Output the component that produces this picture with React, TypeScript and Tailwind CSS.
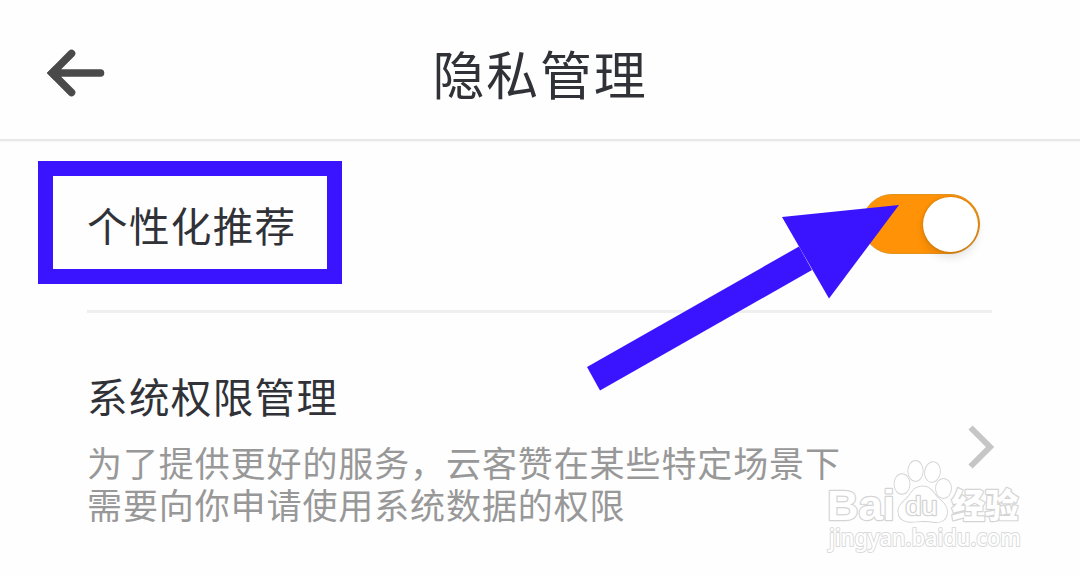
const BackIcon = () => {
  return (
    <svg width="58" height="50" viewBox="0 0 58 50" fill="none">
      <path
        d="M24.5 5.5 L5 25 L24.5 44.5 M6 25 H53.5"
        stroke="#4a4a4a"
        strokeWidth="7.6"
        strokeLinecap="round"
      />
      <path d="M0 25 L7 18 L18 25 L7 32 Z" fill="#4a4a4a" />
    </svg>
  );
};

const ChevronIcon = () => {
  return (
    <svg width="26" height="44" viewBox="0 0 26 44" fill="none">
      <path d="M2.5 2.5 L22 22 L2.5 41.5" stroke="#c6c6c6" strokeWidth="6" />
    </svg>
  );
};

const Header = () => {
  return (
    <header className="grid h-[141px] grid-cols-[105px_1fr_105px] items-center border-b-2 border-[#e8e8e8] pt-[7px] shadow-[0_1px_2px_rgba(0,0,0,0.04)]">
      <button className="pl-[47px]" aria-label="返回">
        <BackIcon />
      </button>
      <h1 className="text-center text-[52px] leading-[64px] tracking-[1.7px] text-[#303238]">
        隐私管理
      </h1>
    </header>
  );
};

const Switch = () => {
  return (
    <div
      role="switch"
      aria-checked="true"
      className="flex h-[60px] w-[118px] items-center justify-end rounded-full border border-[#e39320] bg-[#ff9206] pr-px"
    >
      <div className="size-[55px] rounded-full bg-white shadow-[0_6px_8px_rgba(0,0,0,0.1),0_0_3px_rgba(90,60,0,0.35)]" />
    </div>
  );
};

const PointerArrow = () => {
  return (
    <svg
      className="absolute top-[195px] left-[580px]"
      width="330"
      height="205"
      viewBox="580 195 330 205"
      fill="#3a14ff"
    >
      <path d="M587 367 L799 246.5 L812 270 L600 390.5 Z" />
      <path d="M782 217 L899 205 L829 298.5 Z" />
    </svg>
  );
};

const Watermark = () => {
  return (
    <svg
      className="absolute top-[455px] left-[820px]"
      width="220"
      height="115"
      viewBox="820 455 220 115"
      fill="#fff"
      stroke="#d4d4d4"
      strokeWidth="2.4"
      strokeLinejoin="round"
      paintOrder="stroke"
    >
      <text
        x="827"
        y="520"
        fontFamily="'Liberation Sans', sans-serif"
        fontSize="43"
        fontWeight="700"
        textLength="68"
        lengthAdjust="spacingAndGlyphs"
      >
        Bai
      </text>
      <g strokeWidth="1.8">
        <ellipse cx="902" cy="484" rx="7.5" ry="9.8" />
        <ellipse cx="915.5" cy="471" rx="7.2" ry="10" />
        <ellipse cx="932.5" cy="472" rx="7.4" ry="9.8" transform="rotate(10 932.5 472)" />
        <ellipse cx="943.5" cy="488.5" rx="7.5" ry="9.5" />
        <path d="M922.5 486.5 C931 486.5 933 493 938 498 C943 502 947 506 947 512 C947 519 942 522.5 935 522 C930 521 926 521 922 521 C917 521 913 522.5 908 521.5 C901 520.5 898 516 898.5 510 C899 504 905 501 909 496 C913 490 916 486.5 922.5 486.5 Z" />
      </g>
      <text
        x="905.5"
        y="514.5"
        fontFamily="'Liberation Sans', sans-serif"
        fontSize="25"
        textLength="32"
        lengthAdjust="spacingAndGlyphs"
      >
        du
      </text>
      <text
        x="951.5"
        y="518"
        fontFamily="'Noto Sans CJK SC', sans-serif"
        fontSize="34"
        fontWeight="900"
        textLength="67"
        lengthAdjust="spacingAndGlyphs"
      >
        经验
      </text>
      <text
        x="829"
        y="546"
        fontFamily="'Noto Sans', sans-serif"
        fontSize="23"
        fontWeight="500"
        textLength="192"
        lengthAdjust="spacingAndGlyphs"
        stroke="#dadada"
        strokeWidth="2"
      >
        jingyan.baidu.com
      </text>
    </svg>
  );
};

export default function App() {
  return (
    <div
      lang="zh-CN"
      className="relative h-[576px] w-[1080px] overflow-hidden bg-[#fefefe] font-['Noto_Sans_CJK_SC',sans-serif]"
    >
      <Header />
      <main className="pr-[86px] pl-[87px]">
        <section className="mr-[2px] flex h-[172px] items-center justify-between border-b-[3px] border-[#efefef] pr-[12px] pb-[3px]">
          <div className="relative pt-[11px] leading-[60px]">
            <span className="text-[40.6px] tracking-[1.3px] text-[#303238]">
              个性化推荐
            </span>
            <div className="absolute -top-[23px] -left-[49px] h-[123px] w-[304px] border-[15px] border-[#3a14ff]" />
          </div>
          <Switch />
        </section>
        <section className="flex items-center justify-between pt-[53px]">
          <div>
            <h2 className="text-[40.6px] leading-[60px] tracking-[1.3px] text-[#303238]">
              系统权限管理
            </h2>
            <p className="mt-[15px] w-[760px] text-[35px] leading-[42px] tracking-[0.9px] text-[#989898]">
              为了提供更好的服务，云客赞在某些特定场景下需要向你申请使用系统数据的权限
            </p>
          </div>
          <div className="pt-[2px]">
            <ChevronIcon />
          </div>
        </section>
      </main>
      <PointerArrow />
      <Watermark />
    </div>
  );
}
